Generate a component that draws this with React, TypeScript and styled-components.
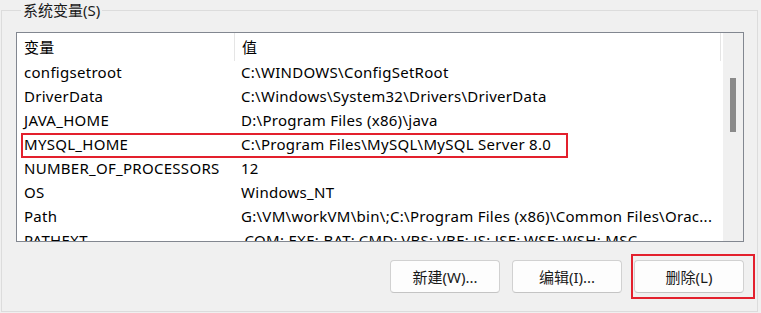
import React from 'react';
import styled, { createGlobalStyle } from 'styled-components';

const GlobalStyle = createGlobalStyle`
  html, body {
    margin: 0;
    padding: 0;
    background: #f0f0f0;
  }
  body {
    font-family: "Noto Sans", "Noto Sans CJK SC", sans-serif;
    font-size: 15px;
    color: #000;
  }
`;

const Page = styled.div`
  width: 761px;
  height: 313px;
  overflow: hidden;
  background: #f0f0f0;
  padding: 0 3px 0 1px;
  box-sizing: border-box;
`;

const Group = styled.fieldset`
  margin: 0;
  min-width: 0;
  height: 312px;
  box-sizing: border-box;
  border: 1px solid #dcdcdc;
  padding: 12px 13px 0 14px;
  display: flex;
  flex-direction: column;
`;

const Legend = styled.legend`
  padding: 0 2px;
  margin-left: 5px;
  line-height: 20px;
  color: #1a1a1a;
`;

const ListBox = styled.div`
  height: 208px;
  border: 1px solid #828790;
  background: #fff;
  display: flex;
  overflow: hidden;
`;

const Table = styled.div`
  flex: 1;
  min-width: 0;
  display: flex;
  flex-direction: column;
  letter-spacing: 0.28px;
`;

const HeaderRow = styled.div`
  height: 27px;
  flex: none;
  display: grid;
  grid-template-columns: 218px 486px 1fr;
`;

const HeaderCell = styled.div<{ $divider?: boolean }>`
  padding-left: 7px;
  line-height: 28px;
  border-right: ${(p) => (p.$divider ? '1px solid #e5e5e5' : 'none')};
`;

const Row = styled.div<{ $marked?: boolean }>`
  position: relative;
  height: 24px;
  flex: none;
  display: grid;
  grid-template-columns: 218px minmax(0, 1fr);
  line-height: 24px;
  white-space: nowrap;

  ${(p) =>
    p.$marked &&
    `
    &::after {
      content: '';
      position: absolute;
      left: 4px;
      top: 1px;
      width: 543px;
      height: 21px;
      border: 2px solid #e3202d;
    }
  `}
`;

const Cell = styled.div<{ $value?: boolean }>`
  padding-left: ${(p) => (p.$value ? '6px' : '7px')};
  overflow: hidden;
`;

const ScrollBar = styled.div`
  width: 20px;
  flex: none;
  background: #f0f0f0;
  display: flex;
  justify-content: center;
  padding-top: 45px;
  box-sizing: border-box;
`;

const Thumb = styled.div`
  width: 6px;
  height: 54px;
  background: #8a8a8a;
`;

const ButtonRow = styled.div`
  display: flex;
  justify-content: flex-end;
  align-items: flex-start;
  gap: 12px;
  margin-top: 18px;
`;

const ButtonWrap = styled.div<{ $marked?: boolean }>`
  position: relative;
  display: flex;

  &::after {
    content: '';
    display: ${(p) => (p.$marked ? 'block' : 'none')};
    position: absolute;
    top: -6px;
    bottom: -6px;
    left: -3px;
    right: -11px;
    border: 2px solid #e3202d;
  }
`;

const Button = styled.button`
  width: 110px;
  height: 33px;
  box-sizing: border-box;
  border: 1px solid #d1d1d1;
  border-bottom-color: #c4c4c4;
  border-radius: 4px;
  background: #fdfdfd;
  font-family: "Noto Sans", "Noto Sans CJK SC", sans-serif;
  font-size: 15px;
  color: #1a1a1a;
  padding: 0;
`;

const rows: { name: string; value: string; marked?: boolean }[] = [
  { name: 'configsetroot', value: 'C:\\WINDOWS\\ConfigSetRoot' },
  { name: 'DriverData', value: 'C:\\Windows\\System32\\Drivers\\DriverData' },
  { name: 'JAVA_HOME', value: 'D:\\Program Files (x86)\\java' },
  { name: 'MYSQL_HOME', value: 'C:\\Program Files\\MySQL\\MySQL Server 8.0', marked: true },
  { name: 'NUMBER_OF_PROCESSORS', value: '12' },
  { name: 'OS', value: 'Windows_NT' },
  { name: 'Path', value: 'G:\\VM\\workVM\\bin\\;C:\\Program Files (x86)\\Common Files\\Orac...' },
  { name: 'PATHEXT', value: '.COM;.EXE;.BAT;.CMD;.VBS;.VBE;.JS;.JSE;.WSF;.WSH;.MSC' },
];

const App: React.FC = () => {
  return (
    <Page>
      <GlobalStyle />
      <Group>
        <Legend>系统变量(S)</Legend>
        <ListBox>
          <Table>
            <HeaderRow>
              <HeaderCell $divider>变量</HeaderCell>
              <HeaderCell $divider>值</HeaderCell>
              <HeaderCell />
            </HeaderRow>
            {rows.map((r) => (
              <Row key={r.name} $marked={r.marked}>
                <Cell>{r.name}</Cell>
                <Cell $value>{r.value}</Cell>
              </Row>
            ))}
          </Table>
          <ScrollBar>
            <Thumb />
          </ScrollBar>
        </ListBox>
        <ButtonRow>
          <ButtonWrap>
            <Button>新建(W)...</Button>
          </ButtonWrap>
          <ButtonWrap>
            <Button>编辑(I)...</Button>
          </ButtonWrap>
          <ButtonWrap $marked>
            <Button>删除(L)</Button>
          </ButtonWrap>
        </ButtonRow>
      </Group>
    </Page>
  );
};

export default App;
